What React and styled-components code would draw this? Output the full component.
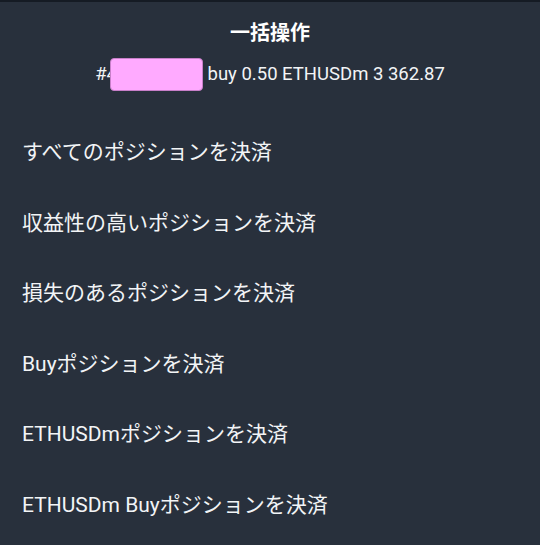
import styled, { createGlobalStyle } from "styled-components";

const GlobalStyle = createGlobalStyle`
  html, body {
    margin: 0;
    padding: 0;
    background: #28303c;
  }
  body {
    font-family: Roboto, "Noto Sans CJK JP", sans-serif;
    color: #f2f4f6;
  }
`;

const actions = [
  "すべてのポジションを決済",
  "収益性の高いポジションを決済",
  "損失のあるポジションを決済",
  "Buyポジションを決済",
  "ETHUSDmポジションを決済",
  "ETHUSDm Buyポジションを決済",
];

const App = () => {
  return (
    <>
      <GlobalStyle />
      <Sheet>
        <Header>
          <Title>一括操作</Title>
          <Subtitle>
            #4<Redact /> buy 0.50 ETHUSDm 3 362.87
          </Subtitle>
        </Header>
        <ActionList>
          {actions.map((label) => (
            <Action key={label}>{label}</Action>
          ))}
        </ActionList>
      </Sheet>
    </>
  );
};

const Sheet = styled.div`
  width: 540px;
  height: 545px;
  box-sizing: border-box;
  border-top: 2px solid #151b24;
  background: #28303c;
  overflow: hidden;
`;

const Header = styled.div`
  text-align: center;
  padding-top: 19px;
`;

const Title = styled.div`
  font-family: Roboto, "Noto Sans CJK JP", sans-serif;
  font-size: 20px;
  font-weight: 700;
  line-height: 24px;
  color: #ffffff;
`;

const Subtitle = styled.div`
  margin-top: 13px;
  font-size: 18.5px;
  line-height: 33px;
  height: 33px;
  white-space: nowrap;
`;

const Redact = styled.span`
  display: inline-block;
  vertical-align: top;
  width: 93px;
  height: 33px;
  margin-left: -7px;
  box-sizing: border-box;
  background: #ffaaff;
  border: 1px solid #c77fc9;
  border-radius: 4px;
`;

const ActionList = styled.div`
  margin-top: 24px;
  display: flex;
  flex-direction: column;
`;

const Action = styled.div`
  height: 70.5px;
  display: flex;
  align-items: center;
  padding-left: 22px;
  font-size: 21px;
  white-space: nowrap;
  cursor: pointer;
`;

export default App;
